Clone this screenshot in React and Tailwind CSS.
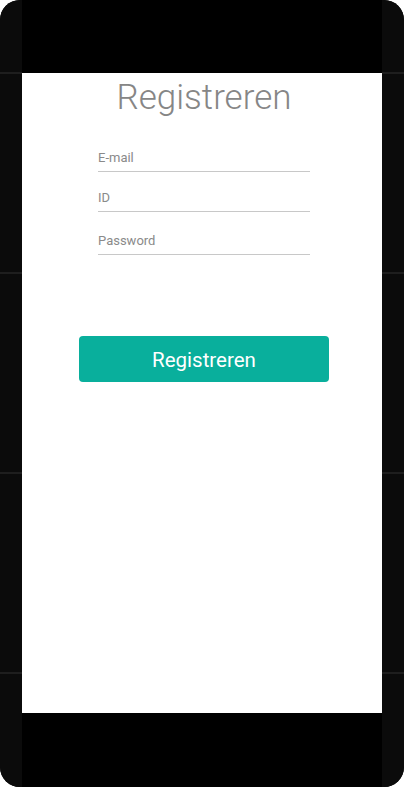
import React from "react";

function SideBar() {
  return (
    <div className="flex w-[22px] flex-col bg-[#0b0b0b]">
      <div className="h-[72px]" />
      <div className="h-[2px] bg-[#1e1e1e]" />
      <div className="h-[198px]" />
      <div className="h-[2px] bg-[#1e1e1e]" />
      <div className="h-[198px]" />
      <div className="h-[2px] bg-[#1e1e1e]" />
      <div className="h-[198px]" />
      <div className="h-[2px] bg-[#1e1e1e]" />
      <div className="flex-1" />
    </div>
  );
}

function Field({ label, className = "" }) {
  return (
    <div className={"border-b border-[#c8c8c8] pb-[5px] " + className}>
      <div className="text-[13px] leading-[16px] text-[#8a8a8a]">{label}</div>
    </div>
  );
}

export default function App() {
  return (
    <div
      className="h-[787px] w-[404px] bg-white"
      style={{ fontFamily: "Roboto, 'Liberation Sans', sans-serif" }}
    >
      <div className="flex h-[787px] w-[404px] overflow-hidden rounded-[20px] bg-[#0b0b0b]">
        <SideBar />
        <div className="flex w-[360px] flex-col">
          <div className="h-[73px] bg-black" />
          <div className="flex h-[640px] flex-col bg-white">
            <h1 className="ml-[4px] mt-[5px] text-center text-[35px] font-light leading-[40px] text-[#868686]">
              Registreren
            </h1>
            <div className="ml-[76px] mt-[32px] flex w-[212px] flex-col">
              <Field label="E-mail" />
              <Field label="ID" className="mt-[18px]" />
              <Field label="Password" className="mt-[21px]" />
            </div>
            <button className="ml-[57px] mt-[81px] h-[46px] w-[250px] rounded-[4px] bg-[#09af9c] pt-[3px] text-[20.5px] text-white">
              Registreren
            </button>
          </div>
          <div className="flex-1 bg-black" />
        </div>
        <SideBar />
      </div>
    </div>
  );
}
